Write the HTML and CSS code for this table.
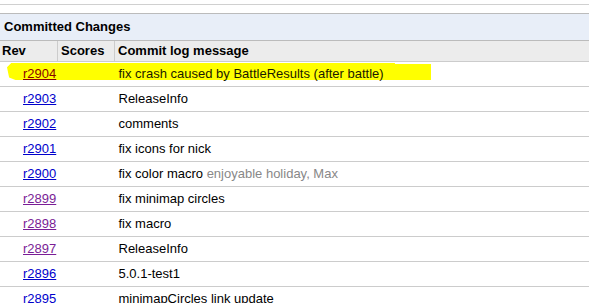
FILE: index.html
```html
<!DOCTYPE html>
<html>
<head>
<meta charset="utf-8">
<link rel="stylesheet" href="styles.css">
</head>
<body>
<div class="rule"></div>
<div class="box">
  <div class="title">Committed Changes</div>
  <table class="changes">
    <thead>
      <tr><th class="c-rev">Rev</th><th class="c-scores">Scores</th><th class="c-msg">Commit log message</th></tr>
    </thead>
    <tbody>
      <tr class="hl"><td class="rev"><span class="marker"></span><a class="lnk hot" href="#">r2904</a></td><td></td><td class="msg"><span class="on">fix crash caused by BattleResults (after battle)</span></td></tr>
      <tr><td class="rev"><a class="lnk" href="#">r2903</a></td><td></td><td class="msg">ReleaseInfo</td></tr>
      <tr><td class="rev"><a class="lnk" href="#">r2902</a></td><td></td><td class="msg">comments</td></tr>
      <tr><td class="rev"><a class="lnk" href="#">r2901</a></td><td></td><td class="msg">fix icons for nick</td></tr>
      <tr><td class="rev"><a class="lnk" href="#">r2900</a></td><td></td><td class="msg">fix color macro <span class="note">enjoyable holiday, Max</span></td></tr>
      <tr><td class="rev"><a class="lnk seen" href="#">r2899</a></td><td></td><td class="msg">fix minimap circles</td></tr>
      <tr><td class="rev"><a class="lnk seen" href="#">r2898</a></td><td></td><td class="msg">fix macro</td></tr>
      <tr><td class="rev"><a class="lnk seen" href="#">r2897</a></td><td></td><td class="msg">ReleaseInfo</td></tr>
      <tr><td class="rev"><a class="lnk" href="#">r2896</a></td><td></td><td class="msg">5.0.1-test1</td></tr>
      <tr><td class="rev"><a class="lnk" href="#">r2895</a></td><td></td><td class="msg">minimapCircles link update</td></tr>
    </tbody>
  </table>
</div>
</body>
</html>
```
FILE: styles.css
```css
html, body {
  margin: 0;
  padding: 0;
  overflow: hidden;
  background: #fff;
}
body {
  font-family: "Liberation Sans", Arial, sans-serif;
  font-size: 13px;
  color: #000;
}
.rule {
  margin-top: 4px;
  border-top: 1px solid #d0d0d0;
}
.box {
  margin-top: 8px;
  border-top: 1px solid #bbbbbb;
}
.title {
  height: 26px;
  line-height: 26px;
  background: #e8eef8;
  border-bottom: 1px solid #bbbbbb;
  font-weight: bold;
  padding-left: 4px;
}
.changes {
  width: 100%;
  border-collapse: collapse;
  border-spacing: 0;
}
.changes th {
  background: #ececec;
  height: 20px;
  padding: 0 0 0 3px;
  text-align: left;
  font-weight: bold;
  border-bottom: 1px solid #cccccc;
  line-height: 20px;
}
.c-rev { width: 55px; padding-left: 2px !important; }
.c-scores { width: 53px; border-left: 1px solid #cccccc; border-right: 1px solid #cccccc; }
.changes td {
  height: 24px;
  padding: 0 0 0 3px;
  border-bottom: 1px solid #cccccc;
  vertical-align: middle;
  line-height: 24px;
  white-space: nowrap;
}
.changes td.rev {
  padding-left: 23px;
  position: relative;
}
.changes td.msg {
  padding-left: 4px;
}
.lnk {
  color: #0000cc;
  text-decoration: underline;
  position: relative;
  z-index: 1;
}
.lnk.seen { color: #7a1d96; }
.lnk.hot { color: #880000; }
.on {
  position: relative;
  z-index: 1;
  color: #1a1a00;
}
.note { color: #888888; }
.marker {
  position: absolute;
  left: 7px;
  top: 1px;
  width: 424px;
  height: 17px;
  background: #ffff00;
  z-index: 0;
  clip-path: polygon(0 25%, 1% 0, 91.5% 0, 91.5% 6%, 100% 6%, 100% 100%, 2% 100%, 0.5% 85%);
}
```
